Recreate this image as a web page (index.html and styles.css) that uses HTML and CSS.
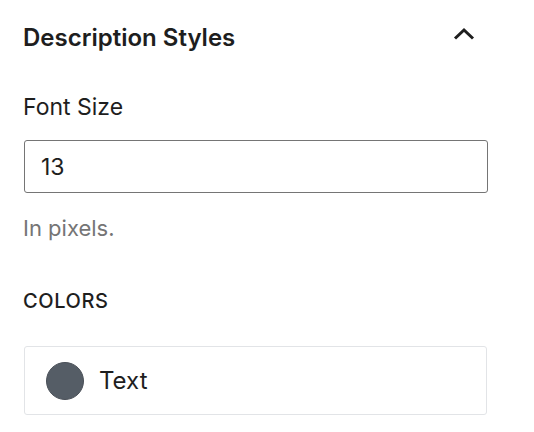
FILE: index.html
```html
<!DOCTYPE html>
<html>
<head>
<meta charset="utf-8">
<link rel="stylesheet" href="styles.css">
</head>
<body>
<div class="panel">
  <div class="panel-header">
    <h2 class="panel-title">Description Styles</h2>
    <span class="toggle" aria-hidden="true">
      <svg width="24" height="24" viewBox="0 0 24 24"><path d="M3 16.5l9-8.5 9 8.5" fill="none" stroke="#1e1e1e" stroke-width="3"/></svg>
    </span>
  </div>
  <div class="field">
    <label class="field-label" for="fs">Font Size</label>
    <input class="field-input" id="fs" type="text" value="13">
    <p class="field-help">In pixels.</p>
  </div>
  <div class="colors">
    <h3 class="colors-title">COLORS</h3>
    <div class="color-item">
      <span class="swatch"></span>
      <span class="color-name">Text</span>
    </div>
  </div>
</div>
</body>
</html>
```
FILE: styles.css
```css
html, body {
  margin: 0;
  background: #fff;
}
body {
  font-family: Inter, "Liberation Sans", sans-serif;
  color: #1e1e1e;
}
.panel {
  padding: 0 46px 0 23px;
}
.panel-header {
  height: 74px;
  display: flex;
  align-items: center;
  justify-content: space-between;
}
.panel-title {
  margin: 0;
  font-size: 24px;
  font-weight: 600;
}
.toggle {
  width: 24px;
  height: 24px;
  margin-right: 12px;
  margin-top: -6px;
}
.field {
  display: flex;
  flex-direction: column;
}
.field-label {
  font-size: 23px;
  line-height: 28px;
  margin-top: 19px;
}
.field-input {
  box-sizing: border-box;
  height: 53px;
  margin: 19px 0 0 1px;
  padding: 0 16px;
  border: 1.5px solid #757575;
  border-radius: 3px;
  font-family: inherit;
  font-size: 23px;
  color: #1e1e1e;
  outline: none;
}
.field-help {
  margin: 21px 0 0;
  font-size: 22px;
  line-height: 28px;
  color: #757575;
}
.colors-title {
  margin: 45px 0 0;
  font-size: 20px;
  line-height: 28px;
  font-weight: 500;
  letter-spacing: 0.6px;
}
.color-item {
  box-sizing: border-box;
  width: 463px;
  height: 69px;
  margin: 31px 0 0 1px;
  border: 1.5px solid #e2e4e7;
  border-radius: 3px;
  display: flex;
  align-items: center;
  padding-left: 21px;
  gap: 15px;
}
.swatch {
  width: 38px;
  height: 38px;
  box-sizing: border-box;
  border-radius: 50%;
  background: #555d66;
  border: 1px solid #4a5058;
}
.color-name {
  font-size: 24px;
}
```
